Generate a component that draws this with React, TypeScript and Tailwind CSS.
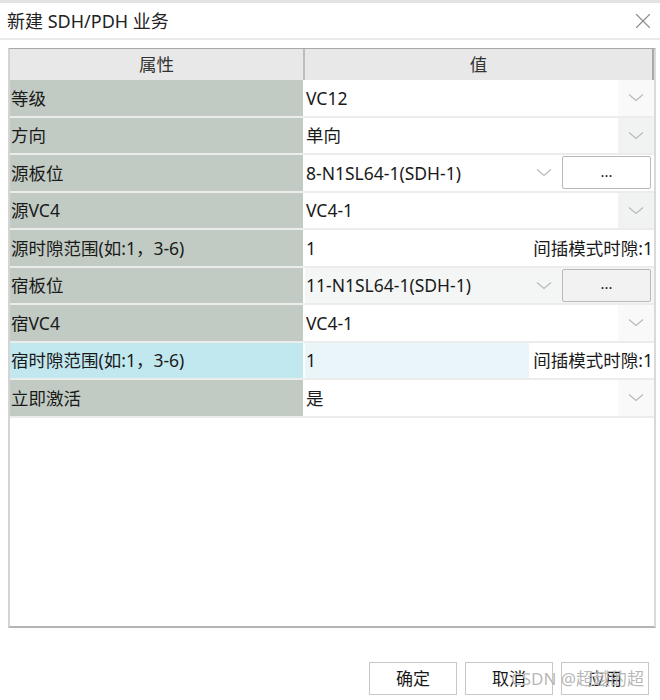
import { X } from "lucide-react"

type Row = {
  label: string
  kind: "combo" | "comboBtn" | "input"
  value: string
  disabled?: boolean
  active?: boolean
}

const rows: Row[] = [
  { label: "等级", kind: "combo", value: "VC12" },
  { label: "方向", kind: "combo", value: "单向", disabled: true },
  { label: "源板位", kind: "comboBtn", value: "8-N1SL64-1(SDH-1)" },
  { label: "源VC4", kind: "combo", value: "VC4-1", disabled: true },
  { label: "源时隙范围(如:1，3-6)", kind: "input", value: "1" },
  { label: "宿板位", kind: "comboBtn", value: "11-N1SL64-1(SDH-1)", disabled: true },
  { label: "宿VC4", kind: "combo", value: "VC4-1" },
  { label: "宿时隙范围(如:1，3-6)", kind: "input", value: "1", active: true },
  { label: "立即激活", kind: "combo", value: "是" },
]

// thin combobox arrow
function Chevron() {
  return (
    <svg width="16" height="9" viewBox="0 0 16 9" fill="none" className="text-[#b8b8b8]">
      <path d="M1 1.5 L8 7.5 L15 1.5" stroke="currentColor" strokeWidth="1.1" />
    </svg>
  )
}

function ValueCell({ row }: { row: Row }) {
  if (row.kind === "input") {
    return (
      <div className="flex h-full flex-1 items-center bg-white">
        <div className={`flex h-full w-[224px] items-center pl-[1px] ${row.active ? "bg-[#eaf5fa]" : "bg-white"}`}>
          {row.value}
        </div>
        <div className="flex-1 whitespace-nowrap pr-[1px] text-right">间插模式时隙:1</div>
      </div>
    )
  }

  if (row.kind === "comboBtn") {
    return (
      <div className={`flex h-full flex-1 items-center ${row.disabled ? "bg-[#f4f6f6]" : "bg-white"}`}>
        <div className="flex h-full w-[257px] items-center justify-between pl-[1px] pr-[10px]">
          <span>{row.value}</span>
          <Chevron />
        </div>
        <div
          className={`flex h-[33px] w-[89px] items-center justify-center rounded-[2px] border border-[#b6b9bc] pb-1 text-[15px] ${
            row.disabled ? "bg-[#f2f2f2]" : "bg-white"
          }`}
        >
          ...
        </div>
      </div>
    )
  }

  return (
    <div className="flex h-full flex-1 items-center bg-white">
      <div className="flex h-full flex-1 items-center pl-[1px]">{row.value}</div>
      <div
        className={`flex h-full w-[36px] items-center justify-center ${row.disabled ? "bg-[#f1f3f3]" : "bg-[#f9f9f9]"}`}
      >
        <Chevron />
      </div>
    </div>
  )
}

export default function App() {
  return (
    <div
      className="relative h-[700px] w-[660px] overflow-hidden border-t-[3px] border-[#e3e3e3] bg-white text-[17.5px] text-[#1a1a1a]"
      style={{ fontFamily: '"Noto Sans", "Noto Sans CJK SC", sans-serif' }}
    >
      <header className="flex h-[37px] items-center justify-between border-b-2 border-[#e9e9e9] pl-[7px] pr-[4px]">
        <h1 className="pt-[1px] text-[18px] font-normal text-[#222]">新建 SDH/PDH 业务</h1>
        <X className="h-[26px] w-[26px] text-[#8c8c8c]" strokeWidth={1} />
      </header>

      <div className="ml-[8px] mt-[8px] flex h-[580px] w-[648px] flex-col border-l-2 border-t border-r-2 border-b-2 border-l-[#d4d4d4] border-t-[#a9a9a9] border-r-[#dadada] border-b-[#b4b4b4]">
        <div className="flex h-[31px] bg-[#e8e8e8] text-[#333]">
          <div className="flex w-[295px] items-center justify-center border-r-2 border-[#bdbdbd]">属性</div>
          <div className="flex flex-1 items-center justify-center border-r-2 border-[#a9a9a9]">值</div>
        </div>

        {rows.map((row) => (
          <div key={row.label} className="flex h-[37.5px] border-b-2 border-[#ececec]">
            <div
              className={`flex w-[295px] items-center whitespace-nowrap border-r-2 border-white pl-[1px] ${
                row.active ? "bg-[#c2e8ef]" : "bg-[#c1cbc3]"
              }`}
            >
              {row.label}
            </div>
            <ValueCell row={row} />
          </div>
        ))}

        <div className="flex-1 bg-white" />
      </div>

      <footer className="mt-[34px] flex justify-end gap-[8px] pr-[11px]">
        {["确定", "取消", "应用"].map((t) => (
          <button
            key={t}
            className="flex h-[33px] w-[88px] items-center justify-center border border-[#c8c8c8] bg-white text-[17px] text-[#1a1a1a]"
          >
            {t}
          </button>
        ))}
      </footer>

      <span className="pointer-events-none absolute bottom-[9px] left-[511px] text-[17px] text-[#b8b8b8]">
        CSDN @超越的超
      </span>
    </div>
  )
}
